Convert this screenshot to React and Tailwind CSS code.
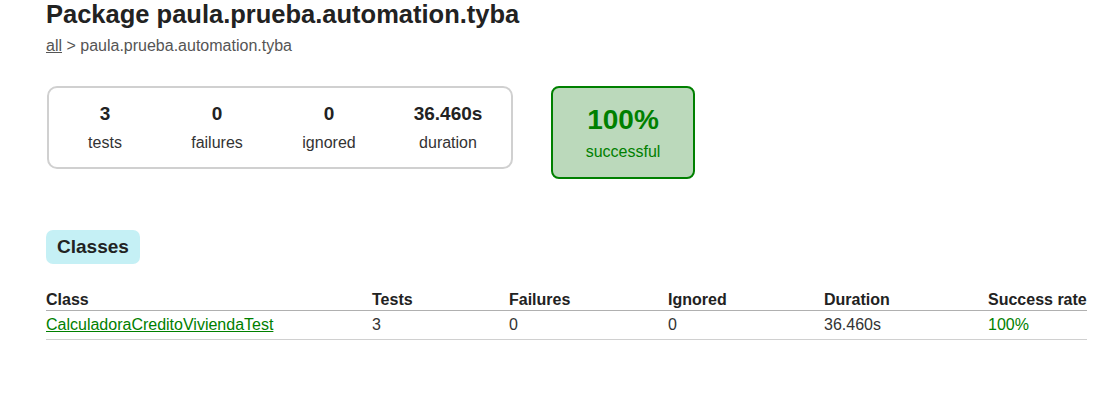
import React from "react"

const counters = [
  { value: "3", label: "tests", width: "w-[112px]" },
  { value: "0", label: "failures", width: "w-[112px]" },
  { value: "0", label: "ignored", width: "w-[112px]" },
  { value: "36.460s", label: "duration", width: "w-[126px]" },
]

function Counter({ value, label, width }) {
  return (
    <div className={`${width} flex flex-col items-center`}>
      <div className="text-[19px] leading-[22px] font-bold text-[#222]">{value}</div>
      <div className="mt-[8px] text-[16px] leading-[20px] text-[#333]">{label}</div>
    </div>
  )
}

export default function App() {
  return (
    <div
      className="min-h-screen bg-white pl-[46px] text-[#222]"
      style={{ fontFamily: '"Liberation Sans", Arial, sans-serif' }}
    >
      <h1 className="text-[25.5px] leading-[28px] font-bold text-[#222]">
        Package paula.prueba.automation.tyba
      </h1>
      <div className="mt-[8px] text-[16px] leading-[20px] text-[#555]">
        <a href="#" className="underline text-[#555]">all</a> &gt; paula.prueba.automation.tyba
      </div>

      <div className="mt-[30px] flex items-start gap-[38px]">
        <div className="flex h-[83px] ml-px rounded-[10px] border-2 border-[#d0d0d0] pt-[15px]">
          {counters.map((c) => (
            <Counter key={c.label} {...c} />
          ))}
        </div>
        <div className="flex h-[93px] w-[144px] flex-col items-center rounded-[8px] border-2 border-[#008000] bg-[#bbd9bb] pt-[16px]">
          <div className="text-[28px] leading-[32px] font-bold text-[#008000]">100%</div>
          <div className="mt-[6px] text-[16px] leading-[20px] text-[#008000]">successful</div>
        </div>
      </div>

      <div className="mt-[51px] flex">
        <div className="flex h-[34px] items-center rounded-[7px] bg-[#c5f0f5] px-[11px] text-[19px] font-bold text-[#222]">
          Classes
        </div>
      </div>

      <div className="mt-[26px] w-[1041px] text-[16px] leading-[20px]">
        <div className="grid grid-cols-[326px_137px_159px_156px_164px_99px] border-b border-[#b0b0b0] font-bold text-[#222]">
          <div>Class</div>
          <div>Tests</div>
          <div>Failures</div>
          <div>Ignored</div>
          <div>Duration</div>
          <div>Success rate</div>
        </div>
        <div className="grid grid-cols-[326px_137px_159px_156px_164px_99px] border-b border-[#d0d0d0] py-[4px] text-[#333]">
          <div>
            <a href="#" className="text-[#008000] underline">CalculadoraCreditoViviendaTest</a>
          </div>
          <div>3</div>
          <div>0</div>
          <div>0</div>
          <div>36.460s</div>
          <div className="text-[#008000]">100%</div>
        </div>
      </div>
    </div>
  )
}
